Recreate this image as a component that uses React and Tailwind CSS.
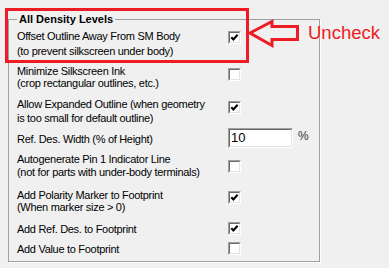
import React from 'react';

const rows = [
  { lines: ['Offset Outline Away From SM Body', '(to prevent silkscreen under body)'], checked: true, rowClass: 'h-[36px]', textClass: 'leading-[15px]', boxClass: 'mt-[2px]' },
  { lines: ['Minimize Silkscreen Ink', '(crop rectangular outlines, etc.)'], checked: false, rowClass: 'h-[32px]', textClass: 'leading-[12px]', boxClass: 'mt-[3px]' },
  { lines: ['Allow Expanded Outline (when geometry', 'is too small for default outline)'], checked: true, rowClass: 'h-[31px]', textClass: 'leading-[14px]', boxClass: 'mt-[4px]' },
  { input: true },
  { lines: ['Autogenerate Pin 1 Indicator Line', '(not for parts with under-body terminals)'], checked: false, rowClass: 'h-[36px]', textClass: 'leading-[13px]', boxClass: 'mt-[7px]' },
  { lines: ['Add Polarity Marker to Footprint', '(When marker size > 0)'], checked: true, rowClass: 'h-[33px]', textClass: 'leading-[12px]', boxClass: 'mt-[2px]' },
  { lines: ['Add Ref. Des. to Footprint'], checked: true, rowClass: 'h-[20px]', textClass: 'leading-[13px] mt-[1px]', boxClass: '' },
  { lines: ['Add Value to Footprint'], checked: false, rowClass: 'h-[14px]', textClass: 'leading-[13px] mt-[1px]', boxClass: '' },
];

function CheckBox({ checked, className }) {
  return (
    <span className={`block w-[13px] h-[13px] border border-t-[#a0a0a0] border-l-[#a0a0a0] border-r-white border-b-white ${className}`}>
      <span className="block w-full h-full border border-t-[#696969] border-l-[#696969] border-r-[#e3e3e3] border-b-[#e3e3e3] bg-white">
        {checked && (
          <svg width="9" height="9" viewBox="0 0 9 9" className="block">
            <path d="M1.3 4.2 L3.4 6.4 L7.6 1.8" fill="none" stroke="#000" strokeWidth="2.1" />
          </svg>
        )}
      </span>
    </span>
  );
}

export default function App() {
  return (
    <div className="relative w-[389px] h-[268px] overflow-hidden bg-[#f0f0f0] pt-[13px] pl-[8px] font-['Liberation_Sans',Arial,sans-serif] text-[11px] text-black">
      <fieldset className="w-[312px] h-[249px] border border-[#a0a0a0] px-[8px] pt-[3px] shadow-[1px_1px_0_#ffffff]">
        <legend className="px-[2px] text-[11px] leading-[13px] font-bold">All Density Levels</legend>

        {rows.map((row, i) =>
          row.input ? (
            <div key={i} className="flex h-[25px]">
              <div className="w-[211px] mt-[5px] leading-[13px] whitespace-nowrap tracking-[-0.3px]">Ref. Des. Width (% of Height)</div>
              <div className="w-[65px] h-[20px] border border-t-[#a0a0a0] border-l-[#a0a0a0] border-r-white border-b-white">
                <div className="w-full h-full border border-t-[#696969] border-l-[#696969] border-r-[#e3e3e3] border-b-[#e3e3e3] bg-white pl-[1px] text-[13px] leading-[16px]">
                  10
                </div>
              </div>
              <span className="ml-[5px] mt-[2px] text-[12px] leading-[13px] text-[#333]">%</span>
            </div>
          ) : (
            <div key={i} className={`flex ${row.rowClass}`}>
              <div className={`w-[211px] whitespace-nowrap tracking-[-0.3px] ${row.textClass}`}>
                {row.lines.map((l, j) => (
                  <div key={j}>{l}</div>
                ))}
              </div>
              <CheckBox checked={row.checked} className={row.boxClass} />
            </div>
          )
        )}
      </fieldset>

      {/* annotation overlay */}
      <div className="absolute left-[5px] top-[8px] w-[244px] h-[55px] border-[3px] border-[#ed1c24]" />
      <svg className="absolute left-0 top-0" width="389" height="268">
        <polygon
          points="250,33 272,21.5 272,26.5 297.5,26.5 297.5,39.5 272,39.5 272,45.5"
          fill="none"
          stroke="#ed1c24"
          strokeWidth="3"
          strokeLinejoin="miter"
        />
      </svg>
      <div className="absolute left-[308px] top-[23px] text-[18.5px] leading-[19px] text-[#ed1c24]">Uncheck</div>
    </div>
  );
}
